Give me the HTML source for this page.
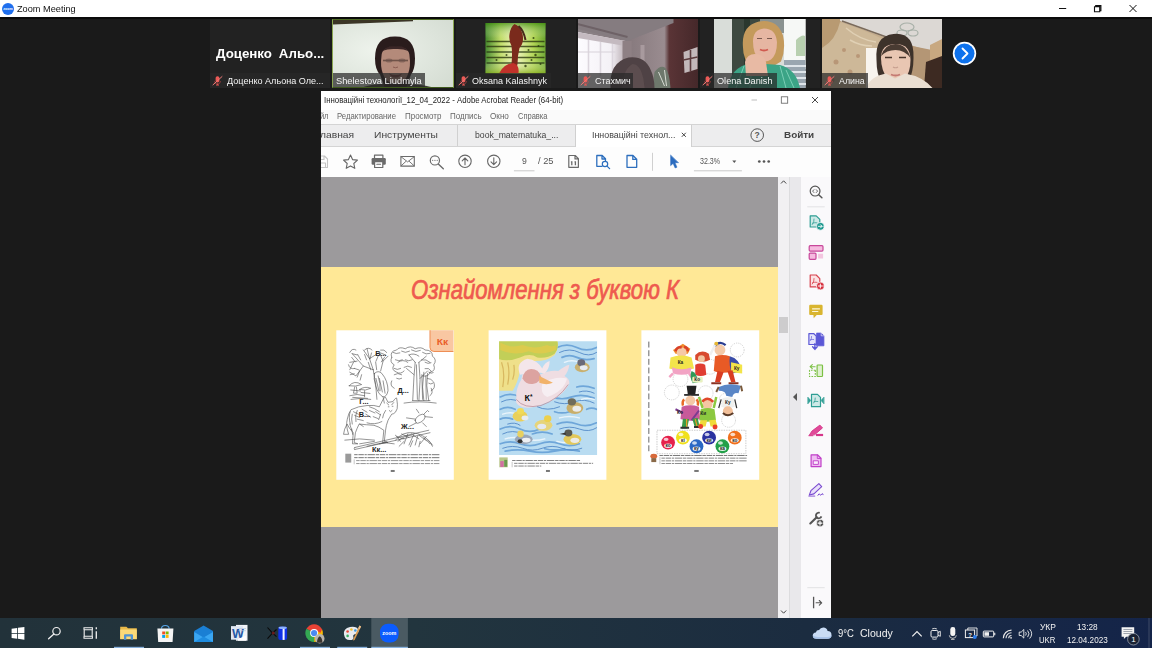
<!DOCTYPE html>
<html><head><meta charset="utf-8">
<style>
*{box-sizing:border-box;margin:0;padding:0}
html,body{width:1152px;height:648px;overflow:hidden;background:#1a1a1a;font-family:"Liberation Sans",sans-serif;}
.abs{position:absolute}
#titlebar{left:0;top:0;width:1152px;height:17.3px;background:#fff;box-shadow:0 2px 0 #0b0b0b}
#titlebar .t{left:16.7px;top:2.6px;font-size:9.8px;color:#111;white-space:nowrap;line-height:12px}
.tile{top:19.4px;height:68.8px;background:#222;overflow:hidden}
.lbl{position:absolute;left:0;bottom:0;height:15.2px;background:rgba(40,40,40,.72);color:#f2f2f2;white-space:nowrap}
.lt{top:3px;font-size:8.9px;line-height:11px;white-space:nowrap;color:#f4f4f4}
.lbl.nomic{padding-left:3px}
.lbl svg{position:absolute;left:3px;top:2.9px;overflow:visible}
#acro{left:321px;top:91px;width:510px;height:526.5px;background:#fff;overflow:hidden}
#taskbar{left:0;top:617.5px;width:1152px;height:30.5px;background:linear-gradient(90deg,#22323a 0%,#22353e 36%,#1b2c40 70%,#142449 100%)}
.tk{color:#f2f2f2;white-space:nowrap}
.mi{top:19.9px;font-size:8.6px;line-height:11px;color:#666;white-space:nowrap}
.tb{top:36.7px;line-height:14px;color:#444;white-space:nowrap}
.tt{top:9.6px;font-size:8.6px;line-height:11px;color:#555;white-space:nowrap}
</style></head><body>
<div id="titlebar" class="abs">
 <svg class="abs" style="left:1.5px;top:2.5px" width="12" height="12" viewBox="0 0 12 12"><circle cx="6" cy="6" r="6" fill="#1f6fee"/><text x="6" y="7.3" font-size="3.6" fill="#fff" text-anchor="middle" font-family="Liberation Sans" font-weight="bold">zoom</text></svg>
 <div class="abs t" id="zt" style="transform:scaleX(0.9373);transform-origin:0 50%">Zoom Meeting</div>
 <svg class="abs" style="left:1050px;top:0" width="102" height="18" viewBox="1050 0 102 18">
  <path d="M1059 8.500h7.200" stroke="#111" stroke-width="1" fill="none"/>
  <path d="M1094.500 6.800h5.200v5h-5.200z M1095.700 6.800v-1.200h5.200v5h-1.200" stroke="#111" stroke-width="1.100" fill="none"/>
  <path d="M1129.500 5l7 7M1136.500 5l-7 7" stroke="#111" stroke-width="1" fill="none"/>
 </svg>
</div>

<!-- video tiles -->
<div id="t1" class="abs tile" style="left:210px;width:120px">
 <div class="abs" id="bn" style="left:6px;top:27.4px;font-size:12.4px;line-height:14px;font-weight:bold;color:#fff;white-space:nowrap;word-spacing:3px;transform:scaleX(1.0731);transform-origin:0 50%">Доценко Альо...</div>
 <div class="lbl" style="width:120.0px"><svg width="11" height="11" viewBox="0 0 11 11"><use href="#mic"/></svg><span class="abs lt" id="l1" style="left:17.0px;transform:scaleX(1.0219);transform-origin:0 50%">Доценко Альона Оле...</span></div>
</div>
<div id="t2" class="abs tile" style="left:332px;width:121.5px;background:#e3eae1;border:1px solid #8aa650;border-top-color:#4f6a24;border-bottom-color:#3f5a1c">
<svg class="abs" style="left:-1px;top:-1.4px" width="122" height="69.500" viewBox="332 19 122 69.500">
 <defs><filter id="vb" x="-10%" y="-10%" width="120%" height="120%"><feGaussianBlur stdDeviation=".7"/></filter>
 <filter id="vb2" x="-20%" y="-20%" width="140%" height="140%"><feGaussianBlur stdDeviation="1.600"/></filter>
 <radialGradient id="g2" cx=".35" cy=".45" r=".8"><stop offset="0" stop-color="#eef3ec"/><stop offset="1" stop-color="#d4dcd2"/></radialGradient></defs>
 <rect x="332" y="19" width="122" height="70" fill="url(#g2)"/>
 <g filter="url(#vb)">
  <path d="M333 20h80v1.300l-80 3.200z" fill="#3a3628"/>
  <path d="M360 88.500q8-4 20-4.500h32q14 1 26 4.500z" fill="#3c3a34"/>
  <path d="M395.500 36.500q19.500 0 19.500 22q0 11-4 16l-5 14h-21l-5-14q-5-5-5-16q0-22 19.500-22z" fill="#2c1d1e"/>
  <path d="M381.500 56q0-9 14-9t14 9q1.500 10-1.500 18q-3 9-12.500 10q-9.500-1-12.500-10q-3-8-1.500-18z" fill="#b48a7a"/>
  <path d="M382 51q6-6 13.500-4.500q8 -1.500 13 4.500q-6-2.500-13-2q-7-.5-13.500 2z" fill="#3a2826"/>
  <path d="M383 60.500h25" stroke="#5e463e" stroke-width="1.600" opacity=".8"/>
  <ellipse cx="389" cy="60.500" rx="3.500" ry="2" fill="#6a5048" opacity=".55"/><ellipse cx="402" cy="60.500" rx="3.500" ry="2" fill="#6a5048" opacity=".55"/>
  <path d="M389 73.500q6.500 3 13 0q-2 4-6.500 4t-6.500-4z" fill="#7a3c3a"/>
  <path d="M393 67q2.500 1.500 5 0" stroke="#8a5c52" stroke-width="1" fill="none"/>
 </g>
</svg>
 <div class="lbl" style="width:91.5px;bottom:-1px;left:0"><span class="abs lt" id="l2" style="left:2.5px;transform:scaleX(1.0475);transform-origin:0 50%">Shelestova Liudmyla</span></div>
</div>
<div id="t3" class="abs tile" style="left:455.5px;width:120px">
<svg class="abs" style="left:0;top:-.4px" width="120" height="69.500" viewBox="455.500 19 120 69.500">
 <defs><linearGradient id="g3" x1="0" x2="1"><stop offset="0" stop-color="#2f7a14"/><stop offset=".25" stop-color="#b8d858"/><stop offset=".5" stop-color="#f0f4b8"/><stop offset=".8" stop-color="#a8d040"/><stop offset="1" stop-color="#5a9a18"/></linearGradient>
 <linearGradient id="g3b" x1="0" x2="0" y1="0" y2="1"><stop offset="0" stop-color="#3a8a10" stop-opacity=".7"/><stop offset=".3" stop-color="#fff" stop-opacity=".1"/><stop offset=".75" stop-color="#fff" stop-opacity=".15"/><stop offset="1" stop-color="#8ab020" stop-opacity=".75"/></linearGradient></defs>
 <rect x="485" y="23" width="60" height="50.500" fill="url(#g3)"/>
 <rect x="485" y="23" width="60" height="50.500" fill="url(#g3b)"/>
 <g filter="url(#vb)">
  <path d="M486 41.500h58M486 46.500h58M486 52h58M486 57.500h58M486 63h58" stroke="#2a3a10" stroke-width="1.300" opacity=".8"/>
  <path d="M514 24q6 2 8 10q2 8-3 14q-2 8-2 16q-1 6-4 9h-14q6-7 12-9q1-10 0-18q-3-6-2-12q1-7 5-10z" fill="#7a2a1c"/>
  <path d="M499 73q4-9 14-10q6 2 5 10z" fill="#c0302a"/>
  <path d="M518 26q5 4 7 14" stroke="#4a2a1a" stroke-width="2" fill="none"/>
  <g fill="#2a3a10" opacity=".8"><circle cx="528" cy="50" r="1"/><circle cx="535" cy="55" r="1.200"/><circle cx="531" cy="60" r="1"/><circle cx="538" cy="46" r="1"/><circle cx="525" cy="66" r="1.200"/><circle cx="506" cy="55" r="1"/><circle cx="496" cy="60" r="1"/><circle cx="540" cy="64" r="1"/><circle cx="533" cy="38" r="1"/></g>
 </g>
</svg>
 <div class="lbl" style="width:95.0px"><svg width="11" height="11" viewBox="0 0 11 11"><use href="#mic"/></svg><span class="abs lt" id="l3" style="left:16.5px;transform:scaleX(1.0122);transform-origin:0 50%">Oksana Kalashnyk</span></div>
</div>
<div id="t4" class="abs tile" style="left:577.5px;width:120px;background:#8a7f80">
<svg class="abs" style="left:0;top:-.4px" width="120" height="69.500" viewBox="577.500 19 120 69.500">
 <defs><linearGradient id="g4" x1="0" x2="1"><stop offset="0" stop-color="#8c8488"/><stop offset=".4" stop-color="#85787c"/><stop offset=".72" stop-color="#9a8c90"/><stop offset=".76" stop-color="#5a3436"/><stop offset="1" stop-color="#45282a"/></linearGradient>
 <linearGradient id="g4w" x1="0" x2="1"><stop offset="0" stop-color="#fdfcff"/><stop offset=".7" stop-color="#f4f1f6"/><stop offset="1" stop-color="#b8acb2"/></linearGradient></defs>
 <rect x="577.500" y="19" width="120" height="69.500" fill="url(#g4)"/>
 <g filter="url(#vb)">
  <path d="M577 19h96v4l-46 18-50-12z" fill="#857c80"/>
  <path d="M577 24l50 13" stroke="#6e6266" stroke-width="2"/>
  <path d="M577 32l48 9v47h-48z" fill="url(#g4w)"/>
  <path d="M577 32l48 9v5l-48-8z" fill="#c4bac0"/>
  <path d="M600 42v34M588 40v40M612 44v30" stroke="#dcd6de" stroke-width="1.600"/>
  <path d="M577 52h38" stroke="#d8d2da" stroke-width="1.200"/>
  <path d="M622 41h9v47h-9z" fill="#8e8084"/>
  <path d="M640 45h4v20h-4z" fill="#a89a9e"/>
  <path d="M683 52l14-5v22l-13 4z" fill="#c2b8ba"/>
  <path d="M683 60l14-3M690 50v21" stroke="#5a3a3c" stroke-width="1.600"/>
  <path d="M654 72q6-8 11-4q4 5 5 20h-18z" fill="#6e786c"/>
  <path d="M658 72l6 14M664 70l2 16" stroke="#d8dcd4" stroke-width="1"/>
  <path d="M610 88.500q-2-26 18-31q16-2 22 12q4 8 4 19z" fill="#504244"/>
  <path d="M622 88q0-18 10-24q10 0 12 24z" fill="#5c4e50"/>
 </g>
</svg>
 <div class="lbl" style="width:55.0px"><svg width="11" height="11" viewBox="0 0 11 11"><use href="#mic"/></svg><span class="abs lt" id="l4" style="left:17.2px;transform:scaleX(1.0102);transform-origin:0 50%">Стахмич</span></div>
</div>
<div id="t5" class="abs tile" style="left:700px;width:120px">
<svg class="abs" style="left:0;top:-.4px" width="120" height="69.500" viewBox="700 19 120 69.500">
 <rect x="714" y="19" width="91.500" height="69.500" fill="#d9ddd9"/>
 <g filter="url(#vb)">
  <rect x="732" y="19" width="30" height="60" fill="#3c4a40"/>
  <rect x="744" y="19" width="6" height="50" fill="#2c382e"/>
  <rect x="760" y="19" width="32" height="14" fill="#8a9290"/>
  <rect x="784" y="19" width="21.500" height="50" fill="#f6f8f6"/>
  <path d="M796 40q6-6 9-4v20h-9z" fill="#b8d0b0"/>
  <rect x="784" y="60" width="21.500" height="28.500" fill="#9aa6b0"/>
  <path d="M784 66h22M784 72h22M784 78h22M784 84h22" stroke="#dfe5ea" stroke-width="2"/>
  <g transform="translate(-1,-2.500)"><path d="M744 50q-2-22 16-26q18-3 24 14q3 14-2 26l-10 6h-20q-8-8-8-20z" fill="#c49a5c"/>
  <path d="M754 44q0-12 11-13q12 0 13 14q0 12-6 17q-6 4-12 0q-6-6-6-18z" fill="#e6b6a2"/>
  <path d="M761 52q4 2 8 0" stroke="#d05a50" stroke-width="1.800" fill="none"/>
  <path d="M758 41h5M768 41h5" stroke="#7a5a50" stroke-width="1"/></g>
  <path d="M728 88q2-20 22-25l30 2q16 4 20 23z" fill="#3aa486"/>
  <path d="M736 88l8-22M750 88l2-24M786 88l-6-22M794 88l-8-18" stroke="#8ad8c0" stroke-width=".8"/>
  <path d="M745 62q2-8 10-8q9 0 11 8l2 14h-22z" fill="#e8baa4"/>
 </g>
</svg>
 <div class="lbl" style="width:77.0px"><svg width="11" height="11" viewBox="0 0 11 11"><use href="#mic"/></svg><span class="abs lt" id="l5" style="left:16.7px;transform:scaleX(1.0320);transform-origin:0 50%">Olena Danish</span></div>
</div>
<div id="t6" class="abs tile" style="left:822px;width:120px;background:#b9a58c">
<svg class="abs" style="left:0;top:-.4px" width="120" height="69.500" viewBox="822 19 120 69.500">
 <rect x="822" y="19" width="120" height="69.500" fill="#c4ac8c"/>
 <g filter="url(#vb)">
  <path d="M822 19h20l-6 20q-8 10-14 12z" fill="#b89a72"/>
  <path d="M840 22q20 6 45 18l-6 48h-57v-40q14-8 18-26z" fill="#cdb898"/>
  <path d="M846 28q14 12 30 14M850 40q10 6 22 6" stroke="#e0d0b4" stroke-width="1.500" fill="none"/>
  <g fill="#b08a6a" opacity=".7"><circle cx="836" cy="62" r="2.500"/><circle cx="850" cy="72" r="2.500"/><circle cx="832" cy="80" r="2.500"/><circle cx="858" cy="56" r="2"/><circle cx="844" cy="50" r="2"/></g>
  <path d="M840 19h102v26l-12 6-40-12-50-18z" fill="#dcd8d4"/>
  <path d="M842 21l50 18" stroke="#7a6a5a" stroke-width="1.500"/>
  <path d="M866 48h16v40h-16z" fill="#f8f4ee"/>
  <path d="M882 40l50 10v38h-50z" fill="#b49674"/>
  <path d="M930 45l12-6v30l-12-8z" fill="#c8a880"/>
  <path d="M926 62l16-6v32h-18z" fill="#3c2a22"/>
  <g fill="none" stroke="#a8b0a8" stroke-width="1.200"><ellipse cx="907" cy="27" rx="7" ry="4"/><ellipse cx="902" cy="33" rx="5" ry="3"/><ellipse cx="913" cy="33" rx="5" ry="3"/></g>
  <path d="M876.500 60q-2-24 17-26q21-2 20 24q0 14-5 24h-27q-5-8-5-22z" fill="#3e302a"/>
  <path d="M881 58q0-14 14.500-14q15 0 15 16q0 12-6 20q-8 7-16 0q-7.500-9-7.500-22z" fill="#e9c6b2"/>
  <path d="M881 56q4-12 14.500-12q11 0 15 14q-6-8-15-8q-9 0-14.500 6z" fill="#4a3a32"/>
  <path d="M885 57.500h7M899 57.500h7" stroke="#4a362c" stroke-width="1.600"/>
  <path d="M891 74.500q4.500 2 9 0" stroke="#c47a72" stroke-width="1.800" fill="none"/>
  <path d="M893 67q2.500 1.500 5 0" stroke="#c8a090" stroke-width="1.200" fill="none"/>
  <path d="M866 88.500q4-12 20-15l9 5 10-5q18 3 28 15z" fill="#eadfd2"/>
 </g>
</svg>
 <div class="lbl" style="width:46.0px"><svg width="11" height="11" viewBox="0 0 11 11"><use href="#mic"/></svg><span class="abs lt" id="l6" style="left:17.3px;transform:scaleX(0.9959);transform-origin:0 50%">Алина</span></div>
</div>
<svg class="abs" style="left:952px;top:41px" width="25" height="25" viewBox="0 0 25 25"><circle cx="12.5" cy="12.5" r="11.7" fill="#fff"/><circle cx="12.5" cy="12.5" r="10" fill="#0e72ed"/><path d="M10.5 7.5l5 5-5 5" stroke="#fff" stroke-width="1.8" fill="none" stroke-linecap="round" stroke-linejoin="round"/></svg>

<svg width="0" height="0" style="position:absolute"><defs>
 <g id="mic"><rect x="2.600" y=".300" width="3.800" height="6.300" rx="1.800" fill="#ec5a56"/><path d="M1.500 5a3 3 0 0 0 6 0" stroke="#d84a48" stroke-width=".700" fill="none" opacity=".7"/><path d="M4.500 7.600v1.200M3 9h3" stroke="#ec5a56" stroke-width="1" fill="none"/><path d="M-.300 9.100L9.300 .300" stroke="#f07a78" stroke-width="1"/></g>
</defs></svg>

<div id="acro" class="abs">
 <!-- title -->
 <div class="abs" id="atitle" style="transform:scaleX(0.9334);transform-origin:0 50%;left:2.6px;top:4.1px;font-size:8.4px;line-height:11px;color:#222;white-space:nowrap">Інноваційні технології_12_04_2022 - Adobe Acrobat Reader (64-bit)</div>
 <svg class="abs" style="left:420px;top:0" width="90" height="19" viewBox="0 0 90 19">
  <path d="M10.5 9h5.5" stroke="#bdbdbd" stroke-width="1" fill="none"/>
  <rect x="40.300" y="5.800" width="6.400" height="6.400" stroke="#606060" stroke-width=".800" fill="none"/>
  <path d="M71 6l6 6M77 6l-6 6" stroke="#333" stroke-width="0.9" fill="none"/>
 </svg>
 <!-- menu -->
 <div class="abs" style="left:0;top:19px;width:510px;height:13.5px;background:#fafafa"></div>
 <div class="abs mi" id="m0" style="left:-11.5px;transform:scaleX(0.8751);transform-origin:0 50%">Файл</div>
 <div class="abs mi" id="m1" style="left:16px;transform:scaleX(0.9012);transform-origin:0 50%">Редактирование</div>
 <div class="abs mi" id="m2" style="left:84px;transform:scaleX(0.9274);transform-origin:0 50%">Просмотр</div>
 <div class="abs mi" id="m3" style="left:129.4px;transform:scaleX(0.9290);transform-origin:0 50%">Подпись</div>
 <div class="abs mi" id="m4" style="left:169px;transform:scaleX(0.9457);transform-origin:0 50%">Окно</div>
 <div class="abs mi" id="m5" style="left:196.5px;transform:scaleX(0.8749);transform-origin:0 50%">Справка</div>
 <!-- tab bar -->
 <div class="abs" style="left:0;top:32.5px;width:510px;height:23px;background:#ededee;border-top:1px solid #d4d4d4;border-bottom:1px solid #d4d4d4"></div>
 <div class="abs tb" id="tb0" style="left:-6.5px;font-size:9.8px;transform:scaleX(1.0483);transform-origin:0 50%">Главная</div>
 <div class="abs tb" id="tb1" style="left:52.7px;font-size:9.8px;transform:scaleX(1.0476);transform-origin:0 50%">Инструменты</div>
 <div class="abs" style="left:136px;top:33.5px;width:1px;height:21px;background:#d0d0d0"></div>
 <div class="abs tb" id="tb2" style="left:153.5px;font-size:8.6px;transform:scaleX(1.0090);transform-origin:0 50%">book_matematuka_...</div>
 <div class="abs" style="left:253.7px;top:33.5px;width:117.6px;height:22px;background:#fff;border-left:1px solid #d0d0d0;border-right:1px solid #d0d0d0"></div>
 <div class="abs tb" id="tb3" style="left:270.8px;font-size:8.6px;transform:scaleX(1.0331);transform-origin:0 50%">Інноваційні технол...</div>
 <svg class="abs" style="left:359px;top:40px" width="8" height="8" viewBox="0 0 8 8"><path d="M1.800 1.800l4 4M5.800 1.800l-4 4" stroke="#444" stroke-width="1" fill="none"/></svg>
 <svg class="abs" style="left:428px;top:35.5px" width="16" height="16" viewBox="0 0 16 16"><circle cx="8.2" cy="8.1" r="6.3" stroke="#555" stroke-width="1" fill="none"/><text x="8.2" y="11.3" font-size="8.5" font-weight="bold" fill="#555" text-anchor="middle" font-family="Liberation Sans">?</text></svg>
 <div class="abs tb" id="tb4" style="left:462.7px;font-size:9.6px;font-weight:bold;color:#444;transform:scaleX(1.0308);transform-origin:0 50%">Войти</div>
 <!-- toolbar -->
 <div class="abs" id="tools" style="left:0;top:55.5px;width:510px;height:30px;background:#fdfdfd">
 <svg class="abs" style="left:0;top:0" width="510" height="30" viewBox="321 146.5 510 30" fill="none" stroke-linecap="round" stroke-linejoin="round">
  <!-- save (clipped) -->
  <path d="M318 155.5h6.5l3 3v8.5h-9.5z M320 167v-4.5h5.5v4.5 M320.5 155.5v3.5h3.5v-3.5" stroke="#c4c4c4" stroke-width="1.1"/>
  <!-- star -->
  <path d="M350.5 154.6l2.05 4.5 4.9.55-3.65 3.35 1 4.85-4.3-2.45-4.3 2.45 1-4.85-3.65-3.35 4.9-.55z" stroke="#666" stroke-width="1.1"/>
  <!-- printer -->
  <path d="M374.5 158v-3.3h8.4v3.3" stroke="#6a6a6a" stroke-width="1.2"/>
  <rect x="371.6" y="157.6" width="14.2" height="6.6" rx="1.2" fill="#6a6a6a" stroke="none"/>
  <rect x="374.6" y="161.2" width="8.2" height="5.8" fill="#fdfdfd" stroke="#6a6a6a" stroke-width="1.2"/>
  <path d="M376.8 163.8h3.8" stroke="#6a6a6a" stroke-width="1.1"/>
  <!-- mail -->
  <rect x="400.9" y="156" width="13.4" height="9.6" stroke="#6a6a6a" stroke-width="1.1"/>
  <path d="M401 156.2l6.6 5.2 6.6-5.2M401 165.4l5-4.6M414.2 165.4l-5-4.6" stroke="#6a6a6a" stroke-width=".9"/>
  <!-- search -->
  <circle cx="434.9" cy="159.9" r="4.6" stroke="#6a6a6a" stroke-width="1.2"/>
  <path d="M438.3 163.4l5 4.8" stroke="#6a6a6a" stroke-width="1.4"/>
  <path d="M432.6 159.9h.1M434.9 159.9h.1M437.2 159.9h.1" stroke="#888" stroke-width="1.2"/>
  <!-- up / down -->
  <circle cx="465" cy="160.8" r="6.2" stroke="#666" stroke-width="1.1"/>
  <path d="M465 164.3v-6.6M462.2 160.3l2.8-2.8 2.8 2.8" stroke="#666" stroke-width="1.1"/>
  <circle cx="493.8" cy="160.8" r="6.2" stroke="#666" stroke-width="1.1"/>
  <path d="M493.8 157.3v6.6M491 161.3l2.8 2.8 2.8-2.8" stroke="#666" stroke-width="1.1"/>
  <!-- page num underline -->
  <path d="M514.3 170.3h19.8" stroke="#c8c8c8" stroke-width="1"/>
  <!-- fit page icon -->
  <path d="M568.8 155h6.4l3.2 3.2v8.6h-9.6z M575 155.2v3.2h3.2" stroke="#6a6a6a" stroke-width="1.2"/>
  <path d="M571.800 160.800v4M575.400 160.800v4M570.900 161.300h1M574.500 161.300h1" stroke="#6a6a6a" stroke-width="1.300" stroke-linecap="butt"/>
  <!-- search doc (blue) -->
  <path d="M602 165.800h-5.200v-10.800h5.400l3.300 3.300v1.600 M602 155.200v3.300h3.300" stroke="#2d6fbe" stroke-width="1.300"/>
  <circle cx="605" cy="163.500" r="2.700" stroke="#2d6fbe" stroke-width="1.200" fill="#fdfdfd"/>
  <path d="M607 165.600l2.600 2.500" stroke="#2d6fbe" stroke-width="1.300"/>
  <!-- page (blue) -->
  <path d="M627 155h6l3.7 3.7v8.1h-9.7z M632.8 155.2v3.7h3.7" stroke="#2d6fbe" stroke-width="1.3"/>
  <!-- divider -->
  <path d="M652.5 152.3v18" stroke="#d0d0d0" stroke-width="1" stroke-linecap="butt"/>
  <!-- pointer -->
  <path d="M670.6 154.8v10.4l2.5-2.3 2 4.6 1.9-.8-2-4.5h3.3z" fill="#2b6cbf" stroke="#2b6cbf" stroke-width=".5"/>
  <!-- zoom underline, dropdown -->
  <path d="M694.3 170.3h47.2" stroke="#c8c8c8" stroke-width="1"/>
  <path d="M732.3 160l2 2.6 2-2.6z" fill="#555" stroke="none"/>
  <circle cx="759.300" cy="161" r="1.350" fill="#555"/><circle cx="764" cy="161" r="1.350" fill="#555"/><circle cx="768.700" cy="161" r="1.350" fill="#555"/>
 </svg>
 <div class="abs tt" id="pg9" style="left:200.7px;transform:scaleX(1.0039);transform-origin:0 50%">9</div>
 <div class="abs tt" id="pg25" style="left:216.8px;transform:scaleX(1.0806);transform-origin:0 50%">/ 25</div>
 <div class="abs tt" id="zm" style="left:378.9px;transform:scaleX(0.8246);transform-origin:0 50%">32.3%</div>
</div>
 <!-- doc -->
 <div class="abs" style="left:0;top:85.5px;width:457px;height:441px;background:#9c9a9c"></div>
 <div class="abs" id="slide" style="left:0;top:175.7px;width:457px;height:260.3px;background:#ffe896">
<!--SLIDE-->
<svg class="abs" style="left:0;top:0" width="457" height="260.3" viewBox="321 266.7 457 260.3">
 <defs>
  <filter id="bl" x="-5%" y="-5%" width="110%" height="110%"><feGaussianBlur stdDeviation="1.6"/></filter>
  <filter id="bl2" x="-5%" y="-5%" width="110%" height="110%"><feGaussianBlur stdDeviation="3"/></filter>
  <clipPath id="cp2"><rect x="65" y="65" width="397" height="460"/></clipPath>
 </defs>
 <!-- title -->
 <text id="stitle" x="411" y="299" font-family="Liberation Sans" font-style="italic" font-size="28.5" fill="#ee5a4f" stroke="#ee5a4f" stroke-width=".75" textLength="268" lengthAdjust="spacingAndGlyphs">Ознайомлення з буквою К</text>

 <!-- PAGE 1 -->
 <rect x="336.3" y="330" width="117.5" height="149.5" fill="#fff"/>
 <g transform="translate(330,325) scale(0.24691)">
  <path d="M405 20h95v82q0 4-4 4h-75q-16 0-16-16z" fill="#f9c7a2"/>
  <path d="M405 20v70q0 16 16 16h79" fill="none" stroke="#ee8a50" stroke-width="4"/>
  <text x="432" y="80" font-family="Liberation Sans" font-weight="bold" font-size="38" fill="#ea5f2a" textLength="46" lengthAdjust="spacingAndGlyphs">Кк</text>
  <g fill="none" stroke="#4a4a4a" stroke-width="2.4" stroke-linecap="round" stroke-linejoin="round" filter="url(#bl)">
   <!-- bare tree left -->
   <path d="M150 95l10 40 15 45M160 135l-25-35M160 135l40-25 25 10M175 180l-40-15-45-50M135 165l-30 40-25-15M175 180l10 60 5 60M200 110l15 35-10 40M90 115l20 5M110 145l-30 5M215 145l20-20M120 185l-10 25M95 150l-15 30"/>
   <path d="M80 110q10-20 25-10M75 160q5 20 25 15M140 100q15-15 30 0M205 100q15-5 25 10"/>
   <!-- bird -->
   <path d="M180 195q15-15 30 0q25 30 25 70q-5 25-20 25q-20-10-30-45q-10-30-5-50zM195 205q10 30 8 60M215 290l5 25"/>
   <!-- mushrooms -->
   <path d="M78 245q20-25 50-5q-25 10-50 5zM100 250l-5 25h15l-3-25M120 260q20-15 45-5q-20 12-45 5zM140 265v25M80 285q30-10 60 0M85 300q40-8 80 0"/>
   <!-- right trees foliage -->
   <path d="M250 130q-10-25 20-30q10-15 35-5q20-15 40 0q25-10 40 5q30 0 30 25q20 15 5 35q10 25-15 30q-5 20-30 15M250 130q-10 20 10 30q-15 20 10 30q15 10 30-5M275 150q20-15 40 0M320 120q20-10 40 5M370 140q20-5 35 10M300 170q15-10 30 0M385 175q15-5 25 10M260 200q15-10 30 0M395 215q15 0 25 15q10 25-10 35M250 225q-10 20 10 30M410 255q10 20-5 30"/>
   <!-- trunks -->
   <path d="M345 150l-5 60-5 95M360 150l5 70-5 85M345 150l-25-30M360 150l30-25M380 190l-5 60 5 55M395 195l-3 50 8 60M335 305h70M300 315q60-10 130 0M340 200l-30-25M365 215l30-30"/>
   <!-- wolf -->
   <path d="M75 440q-12-35-5-60q5-25 15-38q30-15 65-17q30-3 50 5l15-30q8-12 10-8l10 20l20-3q12-18 15-14l3 25q2 20-8 32q-8 8-15 8q-10 15-15 25q-8 20-10 40l-5 45l15 5h-22l5-50q-20-15-40-20q-30-2-60-5q-10 20-15 35l-5 40l15 5h-22l3-45q-15-15-25-35q-12 20-14 40z"/>
   <path d="M230 315l8 8M258 313l-8 9M236 330h3M252 328h3M240 345l5 5 6-5M225 345q-10 15-12 30M110 345q-10 20-5 45M150 395q30 10 60-5M82 350q-8 20 0 50M90 360q-5 20 0 40M160 330q20 5 40 20"/>
   <!-- beetle -->
   <path d="M345 385q5-20 30-25q12 0 10 12q-5 18-30 25q-10 0-10-12zM380 360l15-15 5 5M385 370l30 3M375 395l15 15M345 380l-35-5M350 395l-30 15M360 355l-10-15"/>
   <!-- extra density -->
   <path d="M95 350l20 10M100 365l20 8M110 380l25 6M130 340l20 12M160 345l22 10M185 350l18 12M120 400l15 10M145 360l20 12M175 370l20 8M205 360l-8 22M80 400l8 25M88 420l4 22"/>
   <path d="M255 110q12 8 28 2M290 105q15 10 32 0M330 100q18 12 36 2M375 110q14 10 30 4M265 140q14 8 28 0M305 140q14 8 28 0M385 150q12 8 24 2M260 175q12 8 26 0M400 190q10 8 18 2M270 215q10 6 20 0M400 235q8 6 16 0M350 160l4 140M372 200l3 100M388 205l2 95"/>
   <path d="M88 130l14 18M112 118l12 22M140 118l8 22M168 112l-6 24M196 122l-10 24M222 128l-14 20M100 175l18 6M82 200l16 -4M128 200l-6 22M155 150l10 30M185 150l4 30"/>
   <path d="M186 215l12 50M200 215l12 55M215 225l8 50M84 262l40 4M126 272l36 4M92 292l60 4"/>
   <path d="M270 450l30 10M290 440l30 14M330 440l30 20M360 445l30 22M380 455l25 25M120 480l60 -10M150 490l80 -18M300 470l-20 20M335 468l-10 24M365 470l-5 22"/>
   <!-- log + grass -->
   <path d="M100 495l300-70M100 503l305-68M100 495q-5 5 0 8M265 465q30-35 70-30q50 5 80 50M275 470q25-25 55-25M300 480l15-40M320 485l20-45M345 485l10-35M365 480l25-30M285 470q-10-20-20-25M395 465q15 10 20 25M60 465q60-10 120 0M200 480q30-8 60 0"/>
  </g>
  <g font-family="Liberation Sans" font-weight="bold" font-size="30" fill="#222">
   <text x="183" y="125">Б...</text><text x="273" y="275">Д...</text><text x="118" y="318">Г...</text>
   <text x="116" y="370">В...</text><text x="288" y="420">Ж...</text><text x="170" y="512">Кк...</text>
  </g>
  <!-- paragraph -->
  <g stroke="#777" stroke-width="3.2" stroke-dasharray="14 3 22 3 9 3 30 3" filter="url(#bl)">
   <path d="M98 524h345M98 536h345" stroke="#555"/><path d="M106 548h337M106 560h337"/>
  </g>
  <path d="M98 543v20" stroke="#666" stroke-width="1.5"/>
  <rect x="62" y="520" width="24" height="36" fill="#9a9a9a" filter="url(#bl)"/>
  <rect x="246" y="586" width="16" height="8" fill="#777" filter="url(#bl)"/>
 </g>
 <!-- PAGE 2 -->
 <rect x="488.6" y="330" width="117.8" height="149.5" fill="#fff"/>
 <g transform="translate(483,325) scale(0.24691)">
  <g clip-path="url(#cp2)"><g filter="url(#bl)">
   <rect x="60" y="60" width="410" height="470" fill="#b9dcf1"/>
   <!-- waves -->
   <g fill="none" stroke="#6ea6d9" stroke-width="7" stroke-linecap="round">
    <path d="M300 90q40-20 80 0t80 0M320 130q30-15 60 0t70 5M70 290q40-20 80 0M280 290q40 15 80 0t90 5M70 340q30-15 60 0M300 400q40-15 80 0t80-5M70 420q40-20 80 0t80 0M70 480q40-15 80 0t80 0t80 0t80 0M90 510q50-10 100 0t100 0t100 0M200 440q40-15 80 0M380 250q30-10 70 5M290 350q30 10 60 0M70 380q20-10 50 0M420 340q20-10 40 0M250 500q40 10 80 0"/>
   </g>
   <g fill="none" stroke="#4f86c6" stroke-width="3.5" stroke-linecap="round">
    <path d="M310 110q40-20 80 0t70 0M75 310q40-20 70 0M290 310q40 15 80 0t80 5M310 420q40-15 80 0t70-5M80 440q40-20 80 0M80 498q40-15 80 0t80 0t80 0t80 0M390 270q30-10 60 5M100 400q30-10 50 5M220 330q40 20 90 0"/>
   </g>
   <g fill="none" stroke="#e9f4fb" stroke-width="6" stroke-linecap="round">
    <path d="M330 150q30-12 60 0M80 360q30-12 60 0M310 375q40-12 80 0M90 460q40-12 80 0t80 0M300 470q40 10 80 0M400 300q20-8 50 0"/>
   </g>
   <!-- bank / bush -->
   <path d="M60 60h240q10 30-10 60q-30 25-80 25q-40 10-60 40q-10 50-30 80h-60z" fill="#efe08a"/>
   <path d="M60 60h240q10 30-10 55q-30 20-70 15q-30-20-70 0q-50 20-90 5z" fill="#c2cf58"/>
   <path d="M70 70q40 25 90 10q50 20 100 0q20 10 35 0v20q-60 25-110 5q-60 20-115-5z" fill="#e2c94c" opacity=".8"/>
   <path d="M75 150q15 40 5 100M100 150q10 40 0 90M125 160q5 30-5 60" stroke="#d8b860" stroke-width="5" fill="none"/>
   <!-- mother duck -->
   <path d="M135 300q-5-40 20-80q5-40 30-45q30-5 45 25q40-20 75-15q25-20 45-25q-5 30-20 45q20 10 20 30q-30 60-110 85q-60 25-95 5q-15-10-10-25z" fill="#efdde2"/>
   <path d="M150 200q-20-50 30-65q40 5 60 40q10-25 30-30q0 30-20 50q-40-10-100 5z" fill="#f4e6ea"/>
   <path d="M240 235q50-30 100-20q-10 50-80 75q-30-10-20-55z" fill="#f6eef2"/>
   <path d="M160 215q5-35 35-38q30 0 40 30q-5 25-30 30q-30 5-45-22z" fill="#dca3a0"/>
   <path d="M228 205l55 28q-25 12-55 0z" fill="#f1b26a"/>
   <path d="M135 300q30 40 100 25q70-25 110-85" fill="none" stroke="#b98a98" stroke-width="3"/>
   <!-- ducklings -->
   <g>
    <ellipse cx="402" cy="170" rx="30" ry="20" fill="#c8b070"/><ellipse cx="398" cy="152" rx="16" ry="14" fill="#6a6a78"/><ellipse cx="408" cy="172" rx="16" ry="10" fill="#e8ecf2"/>
    <ellipse cx="372" cy="335" rx="34" ry="24" fill="#c9ae6a"/><ellipse cx="360" cy="310" rx="17" ry="15" fill="#6e6a5a"/><ellipse cx="380" cy="338" rx="18" ry="12" fill="#ecebea"/>
    <ellipse cx="245" cy="405" rx="36" ry="22" fill="#e6d47a"/><ellipse cx="262" cy="378" rx="15" ry="14" fill="#ecd04e"/><ellipse cx="238" cy="410" rx="18" ry="11" fill="#e4e8f0"/>
    <ellipse cx="150" cy="368" rx="30" ry="22" fill="#ead05a"/><ellipse cx="152" cy="348" rx="14" ry="13" fill="#f0da5a"/><ellipse cx="170" cy="375" rx="14" ry="10" fill="#e8ecf2"/>
    <ellipse cx="165" cy="462" rx="36" ry="20" fill="#9aa6b8"/><ellipse cx="152" cy="440" rx="13" ry="14" fill="#e8d060"/><ellipse cx="175" cy="465" rx="18" ry="10" fill="#eef0f4"/><ellipse cx="150" cy="470" rx="10" ry="8" fill="#333"/>
    <ellipse cx="362" cy="462" rx="36" ry="22" fill="#e2c85a"/><ellipse cx="346" cy="436" rx="16" ry="14" fill="#5a5a50"/><ellipse cx="372" cy="466" rx="18" ry="11" fill="#ecebe6"/><path d="M310 440l25-6v10z" fill="#333"/>
   </g>
  </g></g>
  <text x="168" y="305" font-family="Liberation Sans" font-weight="bold" font-size="36" fill="#111">К<tspan font-size="26" dy="-6">*</tspan></text>
  <g stroke="#666" stroke-width="3.2" stroke-dasharray="14 3 22 3 9 3 30 3" filter="url(#bl)">
   <path d="M118 547h275" stroke="#444"/><path d="M126 559h320M126 570h110"/>
  </g>
  <path d="M118 553v22" stroke="#666" stroke-width="1.5"/>
  <g filter="url(#bl)"><rect x="66" y="535" width="34" height="40" fill="#b9c68a"/><rect x="70" y="550" width="14" height="24" fill="#d070a0"/><rect x="86" y="545" width="12" height="28" fill="#6a9a50"/></g>
  <rect x="255" y="586" width="16" height="8" fill="#777" filter="url(#bl)"/>
 </g>
 <!-- PAGE 3 -->
 <rect x="641.4" y="330" width="117.8" height="149.5" fill="#fff"/>
 <g transform="translate(636,325) scale(0.24691)">
  <path d="M52 66v445" stroke="#4a4a4a" stroke-width="3.400" stroke-dasharray="24 11" fill="none"/>
  <g filter="url(#bl)">
   <!-- dashed circles -->
   <g fill="#fff" stroke="#aaa" stroke-width="2" stroke-dasharray="5 4">
    <circle cx="410" cy="100" r="28"/><circle cx="300" cy="168" r="30"/><circle cx="180" cy="218" r="30"/><circle cx="145" cy="272" r="30"/><circle cx="282" cy="275" r="30"/><circle cx="375" cy="385" r="28"/><circle cx="362" cy="300" r="24"/>
   </g>
   <!-- clown 1 -->
   <path d="M150 100l40-25 30 20-10 20h-50z" fill="#f08a2a"/>
   <circle cx="185" cy="110" r="20" fill="#f6c9a8"/><path d="M160 105q5-20 25-15M210 105q0-15-15-18" stroke="#d8402a" stroke-width="10" fill="none"/>
   <path d="M140 130q45-15 85 0l10 45q-50 15-100 0z" fill="#f3e44c"/>
   <path d="M145 170q40 15 80 0l-5 25q-35 10-70 0z" fill="#f2a3c4"/>
   <path d="M150 195l-15 15M215 195l10 15" stroke="#f2a3c4" stroke-width="10"/>
   <!-- clown 2 (small) -->
   <path d="M240 120q25-25 55-5l5 25q-30 15-60 0z" fill="#d8482e"/><circle cx="265" cy="135" r="14" fill="#f2c4a0"/>
   <path d="M240 160q20-10 40 0l5 40q-25 10-45 0z" fill="#e03c30"/>
   <path d="M225 185q20 5 30 45l-25 5q-15-25-5-50z" fill="#2f9a58"/>
   <rect x="228" y="208" width="42" height="24" rx="5" fill="#e8f0c0"/>
   <!-- clown 3 -->
   <circle cx="340" cy="100" r="22" fill="#f4caa8"/><path d="M318 85q20-25 45-5" stroke="#2a3c90" stroke-width="9" fill="none"/><circle cx="325" cy="75" r="8" fill="#e8b830"/>
   <path d="M300 120l20-40" stroke="#f0f0f0" stroke-width="10"/>
   <path d="M320 125q30-10 60 0l10 60q-40 15-75 0z" fill="#e85a28"/>
   <path d="M380 125q40 10 50 60l-40 10q-15-30-10-70z" fill="#3a4ea8"/>
   <path d="M385 150l45 10v35l-45-5z" fill="#f3e448"/>
   <path d="M330 185l-10 45h20l15-40zM370 185l15 45h18l-12-48z" fill="#d83c24"/>
   <path d="M305 235h40M375 235h40" stroke="#8a3020" stroke-width="8"/>
   <!-- clown 4 (top hat) -->
   <path d="M205 245h40l-5 35h-30z" fill="#222"/><path d="M195 282h60" stroke="#222" stroke-width="7"/>
   <circle cx="220" cy="305" r="20" fill="#f4c8a6"/><path d="M195 300q-10 10-5 25M245 300q10 10 5 25" stroke="#e86a28" stroke-width="9" fill="none"/>
   <path d="M185 330q35-12 70 0l5 50q-40 14-80 0z" fill="#c85a9a"/>
   <path d="M160 340l30 15M255 345l-30 40" stroke="#7a3a90" stroke-width="8"/>
   <path d="M190 378l-5 40h22l8-38zM228 378l10 35h20l-8-38z" fill="#3a9a48"/>
   <path d="M205 380v35M240 380l8 32" stroke="#e8a028" stroke-width="5"/>
   <path d="M180 415h35M235 412h30" stroke="#333" stroke-width="8"/>
   <!-- clown 5 -->
   <circle cx="290" cy="320" r="20" fill="#f4c6a2"/><path d="M268 310q20-25 45 0" stroke="#e0482a" stroke-width="10" fill="none"/>
   <path d="M255 290l15 45M325 290l-10 45" stroke="#8cc840" stroke-width="10"/>
   <path d="M262 340q28-10 56 0l6 45q-34 12-68 0z" fill="#8cc840"/>
   <path d="M262 385l-10 25h30l6-25zM296 385l6 25h28l-8-27z" fill="#f0da3a"/>
   <circle cx="262" cy="410" r="10" fill="#e8402a"/><circle cx="320" cy="412" r="10" fill="#e8402a"/>
   <!-- clown 6 upside-down -->
   <path d="M335 250q40-20 90-5l-10 30q-20-5-25 15l-25-5q0-20-30-20z" fill="#5a86c6"/>
   <path d="M335 250l-10 20M425 245l5 22" stroke="#7a5a3a" stroke-width="8"/>
   <path d="M350 295q25-8 45 0l5 35q-28 10-55 0z" fill="#f0f0ee"/>
   <circle cx="372" cy="348" r="20" fill="#f2c09a"/><path d="M352 355q20 18 42 0" stroke="#5a3a28" stroke-width="8" fill="none"/>
   <path d="M345 300l-10 35M400 300l8 35" stroke="#333" stroke-width="5"/>
   <!-- balls -->
   <rect x="85" y="425" width="360" height="95" fill="none" stroke="#999" stroke-width="2" stroke-dasharray="6 4"/>
   <circle cx="130" cy="475" r="28" fill="#e6214c"/><circle cx="190" cy="455" r="28" fill="#f0e01e"/><circle cx="245" cy="490" r="28" fill="#2a68c4"/>
   <circle cx="296" cy="455" r="28" fill="#2a30a0"/><circle cx="350" cy="490" r="28" fill="#22a048"/><circle cx="400" cy="455" r="28" fill="#f0701e"/>
   <g fill="#fff" opacity=".75"><ellipse cx="122" cy="462" rx="10" ry="7"/><ellipse cx="182" cy="442" rx="10" ry="7"/><ellipse cx="237" cy="477" rx="10" ry="7"/><ellipse cx="288" cy="442" rx="10" ry="7"/><ellipse cx="342" cy="477" rx="10" ry="7"/><ellipse cx="392" cy="442" rx="10" ry="7"/></g>
   <g fill="#fff" opacity=".9"><ellipse cx="130" cy="488" rx="16" ry="9"/><ellipse cx="190" cy="466" rx="16" ry="9"/><ellipse cx="245" cy="500" rx="16" ry="9"/><ellipse cx="296" cy="466" rx="16" ry="9"/><ellipse cx="350" cy="500" rx="16" ry="9"/><ellipse cx="400" cy="466" rx="16" ry="9"/></g>
  </g>
  <g font-family="Liberation Sans" font-weight="bold" font-size="19" fill="#222" text-anchor="middle">
   <text x="180" y="158">Ка</text><text x="248" y="227">Ко</text><text x="408" y="182">Ку</text><text x="178" y="360">Ко</text><text x="272" y="365">Ки</text><text x="372" y="318">Ку</text>
   <text x="130" y="494">ко</text><text x="190" y="472">кі</text><text x="245" y="506">ку</text><text x="296" y="472">ки</text><text x="350" y="506">ка</text><text x="400" y="472">ко</text>
  </g>
  <g stroke="#666" stroke-width="3.2" stroke-dasharray="14 3 22 3 9 3 30 3" filter="url(#bl)">
   <path d="M95 527h355" stroke="#444"/><path d="M103 538h347M103 549h347M103 560h290"/>
  </g>
  <g stroke="#e05040" stroke-width="3.2" filter="url(#bl)"><path d="M165 549h14M190 549h10M290 549h14M318 549h10"/></g>
  <path d="M97 533v30" stroke="#666" stroke-width="1.5"/>
  <g filter="url(#bl)"><ellipse cx="72" cy="530" rx="14" ry="10" fill="#d86a3a"/><rect x="62" y="538" width="20" height="16" fill="#8a6a4a"/></g>
  <rect x="236" y="586" width="18" height="8" fill="#777" filter="url(#bl)"/>
 </g>

</svg>
<!--/SLIDE-->
</div>
 <!-- scrollbar -->
 <div class="abs" style="left:457px;top:85.5px;width:11.4px;height:441px;background:#f1f0f2"></div>
 <div class="abs" style="left:458px;top:225.8px;width:9.4px;height:16px;background:#cdcccd"></div>
 <svg class="abs" style="left:457px;top:86px" width="11" height="10" viewBox="0 0 11 10"><path d="M3 6.5l2.6-2.7 2.6 2.7" stroke="#444" stroke-width="1" fill="none"/></svg>
 <svg class="abs" style="left:457px;top:516px" width="11" height="10" viewBox="0 0 11 10"><path d="M3 3.5l2.6 2.7 2.6-2.7" stroke="#444" stroke-width="1" fill="none"/></svg>
 <div class="abs" style="left:468.4px;top:85.5px;width:11.3px;height:441px;background:#e9e8eb;border-left:1px solid #dcdcde"></div>
 <svg class="abs" style="left:470.5px;top:301px" width="6" height="10" viewBox="0 0 6 10"><path d="M5 1v8L1 5z" fill="#555"/></svg>
 <div class="abs" id="rpane" style="left:479.7px;top:85.5px;width:30.3px;height:441px;background:#faf9fb">
<svg class="abs" style="left:0;top:0" width="30.3" height="441" viewBox="800.7 176.5 30.3 441" fill="none" stroke-linecap="round" stroke-linejoin="round">
 <!-- 1 magnifier -->
 <circle cx="814.8" cy="190.6" r="4.9" stroke="#555" stroke-width="1.2"/>
 <path d="M818.4 194.2l3.2 3" stroke="#555" stroke-width="1.5"/>
 <path d="M813.6 189.2l-1.3 1.4 1.3 1.4M816 189.2l1.3 1.4-1.3 1.4" stroke="#555" stroke-width=".9"/>
 <path d="M807.4 206.3h16.6" stroke="#e2e2e4" stroke-width="1"/>
 <!-- 2 teal doc + arrow -->
 <path d="M809.9 215.3h6l3.6 3.6v7.6h-9.6z" fill="#cfe9e7" stroke="#2f9e94" stroke-width="1.2"/>
 <path d="M813.8 218.5q.3 2.5-1.8 5.5M812.5 222.6q2-.8 4.2-.3" stroke="#2f9e94" stroke-width=".8"/>
 <circle cx="820" cy="225.8" r="3.9" fill="#1f9a90" stroke="#faf9fb" stroke-width=".8"/>
 <path d="M818 225.8h3.6M820.3 224.3l1.5 1.5-1.5 1.5" stroke="#fff" stroke-width=".9"/>
 <!-- 3 pink layout -->
 <rect x="808.9" y="245.2" width="13.8" height="5.4" rx="1" fill="#f6badf" stroke="#c8479a" stroke-width="1.2"/>
 <rect x="808.9" y="252.6" width="6.8" height="6.2" rx="1" fill="#f6badf" stroke="#c8479a" stroke-width="1.2"/>
 <rect x="817.8" y="253.2" width="5" height="4.8" fill="#f3c6e0" stroke="none"/>
 <!-- 4 red doc + plus -->
 <path d="M809.9 274.5h6l3.6 3.6v8.3h-9.6z" fill="#fbe3e4" stroke="#d8434e" stroke-width="1.2"/>
 <path d="M813.8 278q.3 2.5-1.8 5.5M812.5 282.1q2-.8 4.2-.3" stroke="#d8434e" stroke-width=".8"/>
 <circle cx="820" cy="285.5" r="3.9" fill="#d6303e" stroke="#faf9fb" stroke-width=".8"/>
 <path d="M818 285.5h4M820 283.5v4" stroke="#fff" stroke-width="1"/>
 <!-- 5 comment -->
 <path d="M810 304.3h11.2q1.1 0 1.1 1.1v8q0 1.1-1.100 1.100h-4.800l-3 3.200-.3-3.200h-3.100q-1.100 0-1.100-1.100v-8q0-1.100 1.100-1.100z" fill="#d9b530" stroke="none"/>
 <path d="M811.8 308.4h7.800M811.800 311h6.200" stroke="#fdf6d8" stroke-width="1.1" stroke-linecap="butt"/>
 <!-- 6 combine (blue-violet) -->
 <path d="M808.6 333.200h5l2.400 2.400v8.400h-7.400z" fill="#e6e5fb" stroke="#5b57d6" stroke-width="1.200"/>
 <path d="M811.300 336q.2 2-1.200 4M810.400 339.200q1.500-.500 3-.2" stroke="#5b57d6" stroke-width=".7"/>
 <path d="M816.600 332.600h4.300l2.700 2.700v10h-7z" fill="#5b57d6" stroke="#5b57d6" stroke-width=".8"/>
 <path d="M820.900 332.600v2.700h2.700" stroke="#faf9fb" stroke-width=".6"/>
 <path d="M814.600 343.300v5.200M812.300 346.300l2.300 2.600 2.300-2.600" stroke="#5b57d6" stroke-width="1.400"/>
 <!-- 7 green organize -->
 <rect x="816.800" y="364.500" width="5.400" height="11.500" rx=".8" fill="#dff0cf" stroke="#7bc043" stroke-width="1.200"/>
 <path d="M815 369.800v6.200h-5.800v-6.200z" stroke="#7bc043" stroke-width="1.100" stroke-dasharray="1.600 1.200" stroke-linecap="butt"/>
 <path d="M814.800 366.200h-4.800M812 364.200l-2.200 2 2.200 2" stroke="#7bc043" stroke-width="1.100"/>
 <!-- 8 teal compress -->
 <path d="M811.200 393.800h6l3 3v9.400h-9z" fill="#cfe9e7" stroke="#2f9e94" stroke-width="1.200"/>
 <path d="M815 397.500q.3 2.300-1.600 5M813.800 401.200q1.800-.700 3.800-.2" stroke="#2f9e94" stroke-width=".8"/>
 <path d="M807.800 397l2.600 3-2.600 3z M823.400 397l-2.600 3 2.600 3z" fill="#2f9e94" stroke="#2f9e94" stroke-width=".8"/>
 <!-- 9 highlighter -->
 <path d="M809.200 434.400l2.400-3.800 8-6 2.600 2.800-7.600 6.600z" fill="#e04a98" stroke="#d6358a" stroke-width=".9"/>
 <path d="M815.600 434.500h7.200" stroke="#d6358a" stroke-width="2.200" stroke-linecap="butt"/>
 <path d="M808.600 435.200h4" stroke="#d6358a" stroke-width="1"/>
 <!-- 10 purple doc -->
 <path d="M810.800 454.300h6.400l3.500 3.500v8.300h-9.900z" fill="#efbdf2" stroke="#c040c8" stroke-width="1.200"/>
 <path d="M817 454.500v3.500h3.500" stroke="#c040c8" stroke-width=".9"/>
 <rect x="813.300" y="460.300" width="4.800" height="3.600" fill="#fbeffc" stroke="#c040c8" stroke-width=".9"/>
 <!-- 11 sign pen -->
 <path d="M809 494.600l1.600-4.400 8-7 2.800 2.900-7.800 7.300z" fill="#e9e0fa" stroke="#7a4ad0" stroke-width="1.100"/>
 <path d="M817.600 494.800q1.200-2.600 2-.8t2-.6q.8-1 1.200.8" stroke="#7a4ad0" stroke-width="1"/>
 <path d="M808.500 495.600h6" stroke="#7a4ad0" stroke-width=".9"/>
 <!-- 12 wrench + plus -->
 <path d="M810 523l6.400-6.200" stroke="#555" stroke-width="2.100"/>
 <path d="M821.100 515.900A2.800 2.800 0 1 1 819.400 512.400" stroke="#555" stroke-width="1.800" stroke-linecap="butt"/>
 <circle cx="819.700" cy="522.600" r="3.800" fill="#555" stroke="#faf9fb" stroke-width=".900"/>
 <path d="M817.700 522.600h4M819.700 520.600v4" stroke="#fff" stroke-width="1.100"/>
 <!-- bottom -->
 <path d="M807.400 587.200h16.600" stroke="#e2e2e4" stroke-width="1"/>
 <path d="M813.300 596.300v11.500" stroke="#555" stroke-width="1.300" stroke-linecap="butt"/>
 <path d="M815.800 602.300h5.200M819 600l2.400 2.300-2.400 2.300" stroke="#555" stroke-width="1.100"/>
</svg>
</div>

</div>
<div id="taskbar" class="abs">
<svg class="abs" style="left:0;top:0" width="1152" height="30.5" viewBox="0 617.5 1152 30.5" fill="none">
 <!-- zoom highlight -->
 <rect x="371.3" y="617.5" width="36.6" height="30.5" fill="#4a5a62"/>
 <!-- start -->
 <path d="M11.600 628.200l5.600-.800v5h-5.600zM18 627.300l6.400-.900v6h-6.400zM11.600 633.200h5.600v5l-5.600-.800zM18 633.200h6.400v6l-6.400-.900z" fill="#fff"/>
 <!-- search -->
 <circle cx="56.500" cy="630.700" r="3.700" stroke="#f0f0f0" stroke-width="1.200"/><path d="M53.900 633.500l-5.300 4.800" stroke="#f0f0f0" stroke-width="1.300" stroke-linecap="round"/>
 <!-- task view -->
 <path d="M84 629.300v-2h8.400v2M84 635.800v2h8.400v-2M84.200 629.300h8v6.500h-8z" stroke="#f0f0f0" stroke-width="1.100"/>
 <path d="M96.300 626.800v2M96.300 630.800v7.400" stroke="#f0f0f0" stroke-width="1.300"/>
 <!-- explorer -->
 <path d="M120.200 626.200h6.200l1.600 1.600h8.800v10.600h-16.600z" fill="#e9b949"/>
 <path d="M120.200 629h16.600v9.800h-16.600z" fill="#fad978"/>
 <path d="M124 639.200v-4.400q0-1 1-1h7q1 0 1 1v4.400h-2.300v-3.200h-4.400v3.200z" fill="#4f93d2"/>
 <rect x="114" y="646.300" width="30" height="1.700" fill="#86b0dc"/>
 <!-- store -->
 <path d="M161.500 628.200q0-3.200 3.800-3.200t3.800 3.200" stroke="#58a6e8" stroke-width="1.100"/>
 <path d="M157.400 628h16l-.8 13.400h-14.400z" fill="#f4f4f4"/>
 <rect x="162.200" y="631" width="2.900" height="2.900" fill="#f25022"/><rect x="165.700" y="631" width="2.900" height="2.900" fill="#7fba00"/><rect x="162.200" y="634.500" width="2.900" height="2.900" fill="#00a4ef"/><rect x="165.700" y="634.500" width="2.900" height="2.900" fill="#ffb900"/>
 <!-- mail -->
 <path d="M194.200 630.500l9.400-5.500 9.400 5.500v11h-18.800z" fill="#1a7fd4"/>
 <path d="M194.200 631.500l9.400 5.600 9.400-5.600v10h-18.800z" fill="#3aa6f2"/>
 <path d="M194.200 641.500l9.400-5.600 9.400 5.600z" fill="#1e8ce0"/>
 <!-- word -->
 <rect x="236" y="624.400" width="11.500" height="15.800" fill="#f2f4f8"/>
 <rect x="231" y="625.600" width="12" height="13.600" fill="#dfe7f3"/>
 <text x="232" y="637" font-family="Liberation Sans" font-weight="bold" font-size="12.500" fill="#2456a4">W</text>
 <path d="M238 638.400l8-3.400v5.200h-8z" fill="#fff" opacity=".9"/>
 <path d="M238.500 628h7.500M238.500 630.200h7.500" stroke="#b8c6dc" stroke-width=".7"/>
 <!-- figure + cylinder -->
 <path d="M267.500 627l5 5.600-5 5.600M276.500 629l-4 3.600 4 3.600" stroke="#0a0a0a" stroke-width="1.100"/>
 <circle cx="273.300" cy="632.600" r="1.500" fill="#6a1a1a"/>
 <rect x="278.300" y="626.200" width="8.800" height="13.400" rx="2" fill="#1030e6"/>
 <ellipse cx="282.700" cy="627.200" rx="4.200" ry="1.300" fill="#8ab0ff"/>
 <rect x="282.600" y="628.400" width="2" height="11" fill="#f4f6ff"/>
 <!-- chrome -->
 <path d="M314.100 632.600L306.480 628.200A8.800 8.800 0 0 1 321.720 628.200z" fill="#e94235"/>
 <path d="M314.100 632.600L321.720 628.200A8.800 8.800 0 0 1 314.100 641.400z" fill="#fbbc04"/>
 <path d="M314.100 632.600L314.100 641.400A8.800 8.800 0 0 1 306.480 628.200z" fill="#34a853"/>
 <path d="M314.100 628.600h8.200l-2 4z" fill="#e94235"/>
 <circle cx="314.100" cy="632.600" r="4" fill="#fff"/><circle cx="314.100" cy="632.600" r="3.100" fill="#4a8af4"/>
 <circle cx="319.700" cy="638.200" r="4.800" fill="#b8b4ac"/><path d="M317 642.200q0-5 2.700-6.500q2.700 1.500 2.700 6.500z" fill="#3a3430"/>
 <rect x="300" y="646.300" width="30" height="1.700" fill="#86b0dc"/>
 <!-- paint -->
 <path d="M344 634q-1-6 6-7.600q7-1 8.400 3q1 3-3 4q-3 .800-2 3q.800 3-3.500 3.200q-5 .200-5.900-5.600z" fill="#e8eaee"/>
 <circle cx="347.600" cy="631" r="1.300" fill="#e84a3a"/><circle cx="351.400" cy="629" r="1.300" fill="#f0c030"/><circle cx="355.300" cy="630" r="1.300" fill="#3a9ae0"/><circle cx="347.600" cy="635.400" r="1.300" fill="#3ab060"/>
 <path d="M359.500 625l1.600 1-6.500 13.500-1.500.600.200-1.600z" fill="#d89a50"/><path d="M359.500 625l1.600 1-1.400 2.800-1.600-1z" fill="#e8c090"/>
 <rect x="337.200" y="646.300" width="30" height="1.700" fill="#86b0dc"/>
 <!-- zoom -->
 <rect x="380" y="623.200" width="18.600" height="18.800" rx="8" fill="#0b5cff"/>
 <text x="389.300" y="634.300" font-family="Liberation Sans" font-weight="bold" font-size="5.400" fill="#fff" text-anchor="middle">zoom</text>
 <rect x="371.300" y="646.300" width="36.600" height="1.700" fill="#8ab4e0"/>
 <!-- weather -->
 <path d="M816.500 638.200q-3.700 0-3.700-3.200q0-2.800 3-3.100q.600-2.400 3.200-2.400q1.400-2.500 4.300-2.500q3.600 0 4.300 3.600q3.900.200 3.900 3.800q0 3.800-4 3.800z" fill="#c9dcf5"/>
 <path d="M816.500 638.200q-3.700 0-3.700-3.200q2 1.600 6 1.400h9q2.800 0 3.700-2q0 3.800-4 3.800z" fill="#a9c4ea"/>
 <!-- chevron -->
 <path d="M912.300 635.800l4.700-4.800 4.700 4.800" stroke="#f0f0f0" stroke-width="1.200"/>
 <!-- meet now -->
 <rect x="931" y="630" width="7" height="6.600" rx="1.200" stroke="#f0f0f0" stroke-width="1"/>
 <path d="M938 632l2.300-1.200v5l-2.300-1.200M932.200 628.400q2.300-1 4.600 0M932.200 638.300q2.300 1 4.600 0" stroke="#f0f0f0" stroke-width=".9"/>
 <!-- mic -->
 <rect x="950.300" y="626.600" width="5" height="9" rx="2.300" fill="#f4f4f4"/>
 <path d="M949.300 634.800q0 3 3.500 3t3.500-3" stroke="#c8c8c8" stroke-width=".9"/><path d="M952.800 637.800v1M951 639h3.600" stroke="#c8c8c8" stroke-width=".8"/>
 <!-- monitor -->
 <path d="M967.800 629.500v-2h9.200v8h-1.500" stroke="#f0f0f0" stroke-width=".9"/>
 <rect x="965.400" y="629.500" width="9.200" height="7.600" stroke="#f0f0f0" stroke-width="1"/>
 <text x="968.300" y="636" font-family="Liberation Sans" font-weight="bold" font-size="6" fill="#f0f0f0">?</text>
 <circle cx="974.800" cy="636.600" r="2" fill="#2a7ae8"/>
 <!-- battery -->
 <rect x="983.300" y="630.600" width="10.400" height="5.800" rx=".8" stroke="#f0f0f0" stroke-width="1"/><rect x="984.400" y="631.700" width="4.600" height="3.600" fill="#f0f0f0"/><rect x="994.200" y="632.300" width="1.100" height="2.400" fill="#f0f0f0"/>
 <!-- wifi -->
 <g stroke="#e8e8e8" stroke-width="1.100" stroke-linecap="butt"><path d="M1003.300 637.800a8.200 8.200 0 0 1 8.200-8.200"/><path d="M1006 637.800a5.500 5.500 0 0 1 5.500-5.500"/><path d="M1008.700 637.800a2.800 2.800 0 0 1 2.800-2.800"/></g><rect x="1010.300" y="636.600" width="1.500" height="1.500" fill="#e8e8e8"/>
 <!-- volume -->
 <path d="M1019.200 631.600h2l2.600-2.600v8.600l-2.600-2.600h-2z" stroke="#f0f0f0" stroke-width=".9"/>
 <path d="M1025.600 631.600q1.400 1.700 0 3.400M1027.600 630q2.800 3.300 0 6.600M1029.600 628.500q4.200 4.800 0 9.600" stroke="#f0f0f0" stroke-width=".9"/>
 <!-- notification -->
 <path d="M1121.600 626.800h12.600v9.400h-8l-2.300 2.200v-2.200h-2.300z" fill="#f4f4f4"/>
 <path d="M1123.400 629h9M1123.400 631h9M1123.400 633h9" stroke="#7a8290" stroke-width=".7"/>
 <circle cx="1133.400" cy="638.700" r="5.800" fill="#1a2233" stroke="#9aa2b0" stroke-width=".8"/>
 <text x="1133.400" y="641.800" font-family="Liberation Sans" font-size="8" fill="#fff" text-anchor="middle">1</text>
 <path d="M1149 617.500v30.500" stroke="#4a5670" stroke-width=".8"/>
</svg>
 <div class="abs tk" id="k1" style="left:837.5px;top:9.6px;font-size:11.2px;line-height:13px;transform:scaleX(0.8466);transform-origin:0 50%">9°C</div>
 <div class="abs tk" id="k2" style="left:860.4px;top:9.6px;font-size:11.2px;line-height:13px;transform:scaleX(0.9418);transform-origin:0 50%">Cloudy</div>
 <div class="abs tk" id="k3" style="left:1039.5px;top:3.5px;font-size:9.3px;line-height:12px;transform:scaleX(0.9070);transform-origin:0 50%">УКР</div>
 <div class="abs tk" id="k4" style="left:1039px;top:16.9px;font-size:9.3px;line-height:12px;transform:scaleX(0.8350);transform-origin:0 50%">UKR</div>
 <div class="abs tk" id="k5" style="left:1076.5px;top:3.5px;font-size:9.3px;line-height:12px;transform:scaleX(0.8897);transform-origin:0 50%">13:28</div>
 <div class="abs tk" id="k6" style="left:1066.7px;top:16.9px;font-size:9.3px;line-height:12px;transform:scaleX(0.8747);transform-origin:0 50%">12.04.2023</div>
</div>

</body></html>
